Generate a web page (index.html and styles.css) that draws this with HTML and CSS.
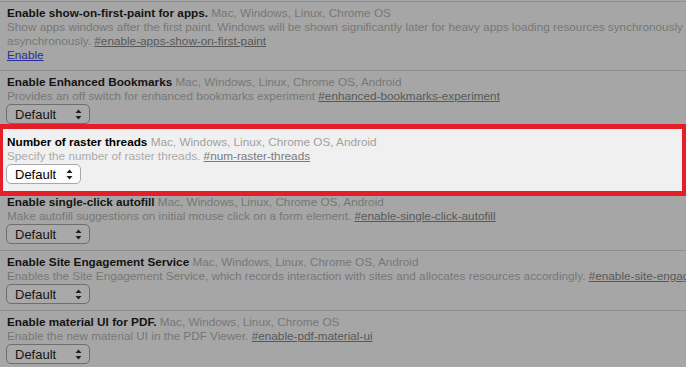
FILE: index.html
```html
<!DOCTYPE html>
<html>
<head>
<meta charset="utf-8">
<link rel="stylesheet" href="styles.css">
</head>
<body>
<div class="flags">
  <div class="experiment">
    <div class="title"><span class="name">Enable show-on-first-paint for apps.</span> <span class="platforms">Mac, Windows, Linux, Chrome OS</span></div>
    <div class="desc">Show apps windows after the first paint. Windows will be shown significantly later for heavy apps loading resources synchronously and insignificantly later for apps loading most of their resources<br>asynchronously. <a class="permalink" href="#">#enable-apps-show-on-first-paint</a></div>
    <div class="actions"><a class="action" href="#">Enable</a></div>
  </div>
  <div class="experiment">
    <div class="title"><span class="name">Enable Enhanced Bookmarks</span> <span class="platforms">Mac, Windows, Linux, Chrome OS, Android</span></div>
    <div class="desc">Provides an off switch for enhanced bookmarks experiment <a class="permalink" href="#">#enhanced-bookmarks-experiment</a></div>
    <div class="select"><span>Default</span><svg width="7" height="11" viewBox="0 0 7 11"><path d="M3.5 0.5 L6.5 4 L0.5 4 Z M3.5 10.5 L6.5 7 L0.5 7 Z"/></svg></div>
  </div>
  <div class="experiment highlighted">
    <div class="title"><span class="name">Number of raster threads</span> <span class="platforms">Mac, Windows, Linux, Chrome OS, Android</span></div>
    <div class="desc">Specify the number of raster threads. <a class="permalink" href="#">#num-raster-threads</a></div>
    <div class="select"><span>Default</span><svg width="7" height="11" viewBox="0 0 7 11"><path d="M3.5 0.5 L6.5 4 L0.5 4 Z M3.5 10.5 L6.5 7 L0.5 7 Z"/></svg></div>
  </div>
  <div class="experiment">
    <div class="title"><span class="name">Enable single-click autofill</span> <span class="platforms">Mac, Windows, Linux, Chrome OS, Android</span></div>
    <div class="desc">Make autofill suggestions on initial mouse click on a form element. <a class="permalink" href="#">#enable-single-click-autofill</a></div>
    <div class="select"><span>Default</span><svg width="7" height="11" viewBox="0 0 7 11"><path d="M3.5 0.5 L6.5 4 L0.5 4 Z M3.5 10.5 L6.5 7 L0.5 7 Z"/></svg></div>
  </div>
  <div class="experiment">
    <div class="title"><span class="name">Enable Site Engagement Service</span> <span class="platforms">Mac, Windows, Linux, Chrome OS, Android</span></div>
    <div class="desc">Enables the Site Engagement Service, which records interaction with sites and allocates resources accordingly. <a class="permalink" href="#">#enable-site-engagement-service</a></div>
    <div class="select"><span>Default</span><svg width="7" height="11" viewBox="0 0 7 11"><path d="M3.5 0.5 L6.5 4 L0.5 4 Z M3.5 10.5 L6.5 7 L0.5 7 Z"/></svg></div>
  </div>
  <div class="experiment">
    <div class="title"><span class="name">Enable material UI for PDF.</span> <span class="platforms">Mac, Windows, Linux, Chrome OS</span></div>
    <div class="desc">Enable the new material UI in the PDF Viewer. <a class="permalink" href="#">#enable-pdf-material-ui</a></div>
    <div class="select"><span>Default</span><svg width="7" height="11" viewBox="0 0 7 11"><path d="M3.5 0.5 L6.5 4 L0.5 4 Z M3.5 10.5 L6.5 7 L0.5 7 Z"/></svg></div>
  </div>
</div>
</body>
</html>
```
FILE: styles.css
```css
html, body {
  margin: 0;
  padding: 0;
}
body {
  background: #a6a6a6;
  overflow: hidden;
  font-family: "Liberation Sans", Arial, Helvetica, sans-serif;
  font-size: 11.75px;
  color: #141414;
}
.flags {
  width: 1100px;
  padding-top: 1px;
}
.experiment {
  border-top: 1px solid #8e8e8e;
  padding: 4px 0 6px 7px;
}
.title, .desc, .actions {
  line-height: 14px;
  white-space: nowrap;
}
.name {
  font-weight: bold;
  color: #141414;
}
.platforms {
  color: #777;
}
.desc {
  color: #777;
}
.permalink {
  color: #585858;
  text-decoration: underline;
}
.actions {
  margin-bottom: 2px;
}
.action {
  color: #2a2a9a;
  text-decoration: underline;
}
.select {
  display: flex;
  align-items: center;
  justify-content: space-between;
  box-sizing: border-box;
  width: 84px;
  height: 20px;
  margin: 1px 0 0 -1px;
  padding: 0 7px 0 8px;
  border: 1px solid #6e6e6e;
  border-radius: 5px;
  background: #a9a9a9;
  color: #141414;
  font-size: 13px;
}
.select svg {
  fill: #1e1e1e;
}
.highlighted {
  width: 677px;
  box-sizing: border-box;
  margin-left: 4px;
  padding-left: 3px;
  background: #f0f0f0;
  border-top-color: #f0f0f0;
  box-shadow: 0 0 0 1px #f0f0f0, 0 0 0 6px #e51f27;
  position: relative;
}
.highlighted .name {
  color: #000;
}
.highlighted .platforms {
  color: #a0a0a0;
}
.highlighted .desc {
  color: #ababab;
}
.highlighted .permalink {
  color: #7a7a7a;
}
.highlighted .select {
  width: 75px;
  background: #fdfdfd;
  border-color: #a8a8a8;
  color: #000;
}
.highlighted + .experiment {
  border-top-color: transparent;
}
```
